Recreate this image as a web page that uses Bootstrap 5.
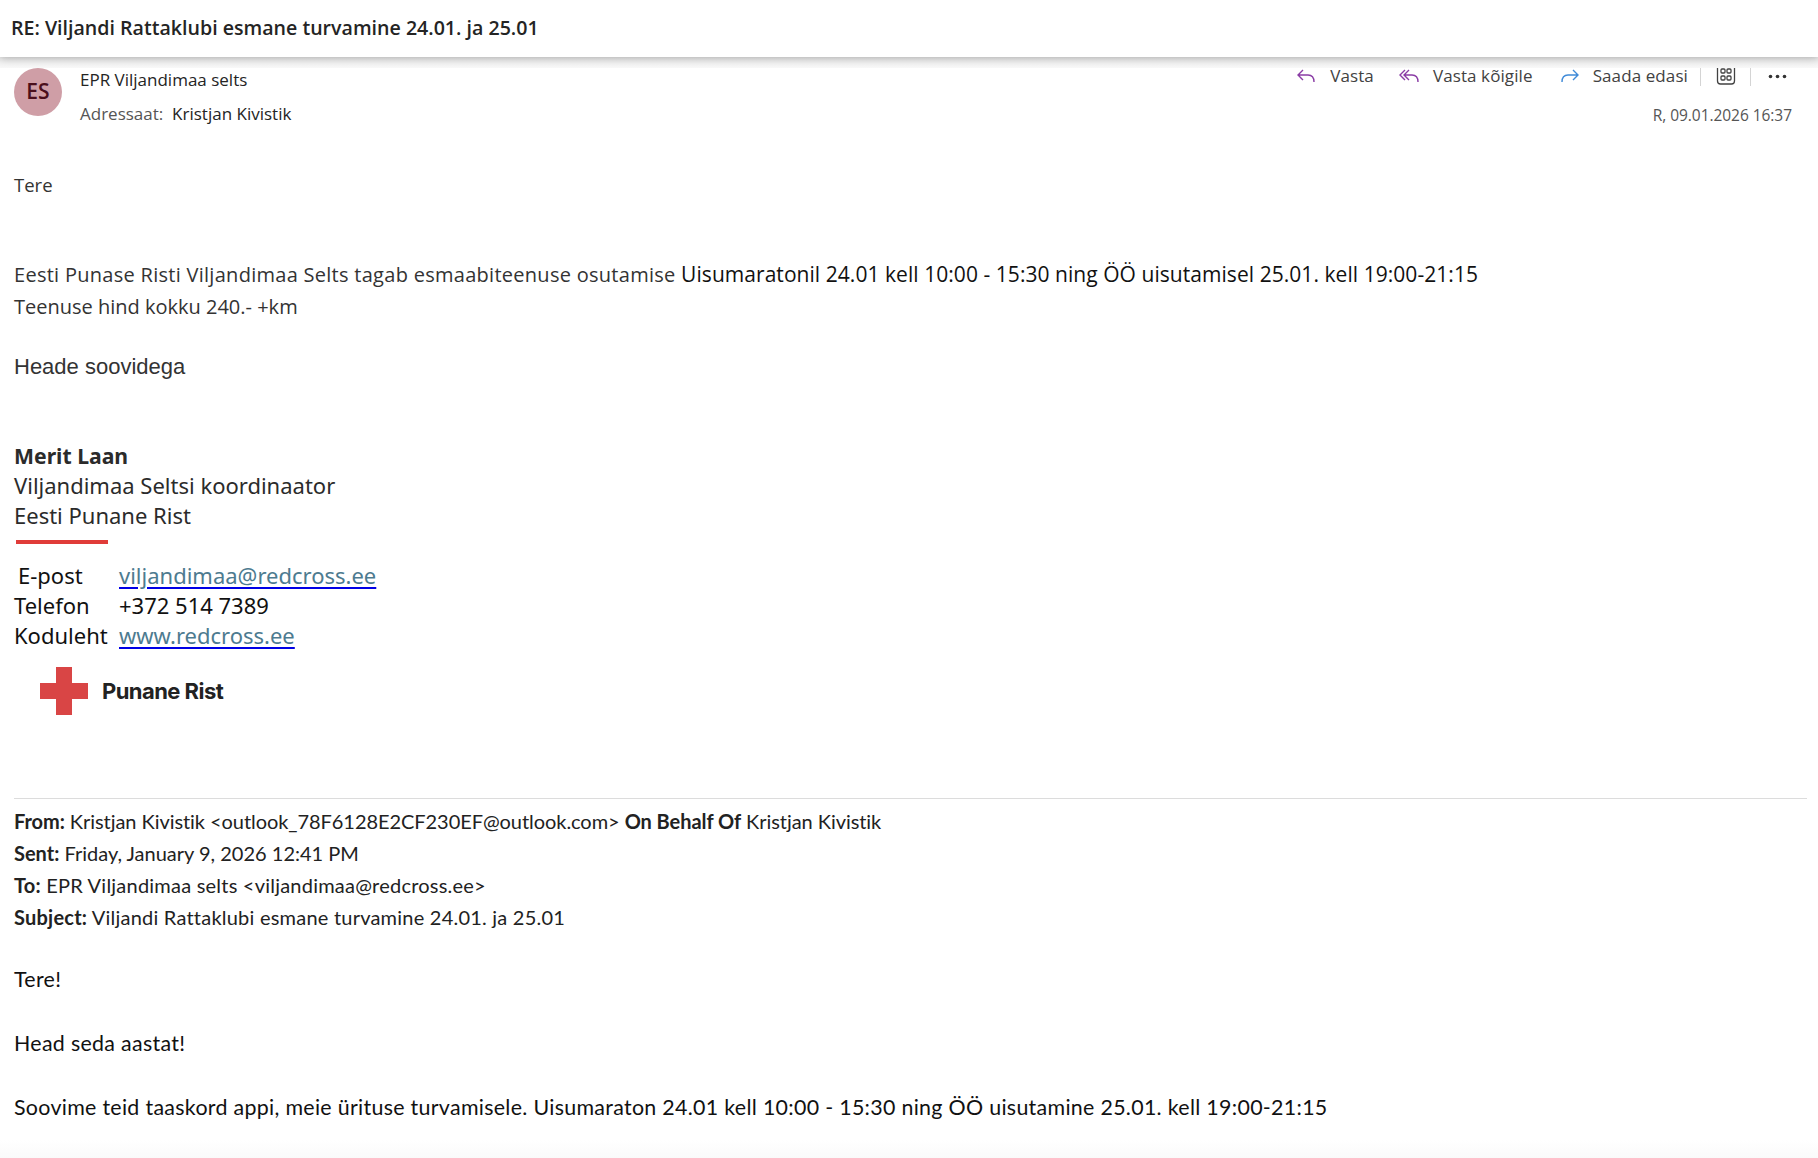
<!DOCTYPE html>
<html lang="et">
<head>
<meta charset="utf-8">
<title>RE: Viljandi Rattaklubi esmane turvamine</title>
<link href="https://cdn.jsdelivr.net/npm/bootstrap@5.3.0/dist/css/bootstrap.min.css" rel="stylesheet">
<style>
html,body{height:1158px;overflow:hidden;background:#fff}
body{font-family:"Open Sans","Noto Sans",sans-serif;color:#242424}
.mail-top{height:57px;background:#fff;box-shadow:0 1px 8px rgba(0,0,0,.28);position:relative;z-index:2;padding-left:11px;font-size:19.6px;font-weight:600;line-height:56px}
.mail-band{height:11px;background:linear-gradient(#ececec,#f8f8f8);position:relative;z-index:1}
.mail-head{height:64px;margin-top:-11px;padding:11px 26px 0 14px}
.avatar-es{width:48px;height:48px;background:#cf9ea6;color:#4a0f1c;font-size:21px;font-weight:600;margin-right:18px}
.who{font-size:17px;line-height:1}
.who-a{padding-top:3px;height:37px}
.who-b{color:#555}
.tool{font-size:17px;color:#424242;letter-spacing:.1px;line-height:22px;height:22px;margin-top:-3px}
.tool svg{display:block}
.tool-gap{margin-right:13px}
.tool-sep{width:1px;height:20px;background:#d4d4d4}
.date-r{font-size:15.5px;color:#555;letter-spacing:-.05px;line-height:20px;margin-top:18px}
.body-a{font-size:20px;color:#333;padding-left:14px;line-height:32px}
.sig{font-family:"Noto Sans",sans-serif;font-size:22px;line-height:30px;color:#2b2b2b;padding-left:14px}
.sig-name{font-size:21.2px;line-height:29px}
.rule-red{width:92px;height:4px;background:#e03c39;margin:10px 0 16px 2px}
.sig-grid{display:grid;grid-template-columns:105px auto;justify-content:start;color:#111}
.sig-grid a{color:#4d7b90;text-decoration-color:#0000e6;text-decoration-thickness:2px;text-underline-offset:3px}
.logo-rp{margin:17px 0 0 26px;height:48px;font-family:"Inter",sans-serif;font-size:22px;font-weight:700;letter-spacing:-.55px;color:#222;gap:14px}
.quote{font-family:"Lato",sans-serif;color:#111}
.quote-rule{height:1px;background:#dcdcdc;margin:0 11px 0 14px}
.q-head{font-size:20px;line-height:32px;padding-left:14px;margin-top:6px;color:#222}
.q-wide{letter-spacing:.22px}
.q-body{font-size:21.4px;line-height:32px;padding-left:14px;letter-spacing:.3px}
.fade-end{height:18px;margin-top:17px;background:linear-gradient(#fff,#fafafa)}
</style>
</head>
<body>
<div class="mail-top">RE: Viljandi Rattaklubi esmane turvamine 24.01. ja 25.01</div>
<div class="mail-band"></div>
<div class="mail-head d-flex">
  <div class="avatar-es rounded-circle d-flex align-items-center justify-content-center flex-shrink-0">ES</div>
  <div class="who flex-grow-1">
    <div class="who-a">EPR Viljandimaa selts</div>
    <div><span class="who-b">Adressaat:</span>&nbsp; Kristjan Kivistik</div>
  </div>
  <div class="d-flex flex-column align-items-end">
    <div class="tool d-flex align-items-center">
      <svg class="tool-gap" width="21" height="17" viewBox="0 0 21 17" fill="none" stroke="#8a3ca5" stroke-width="1.4"><path d="M7 2 2 7l5 5M2 7h10c4 0 6 2.500 6 7"/></svg>
      <span style="margin-right:25px">Vasta</span>
      <svg class="tool-gap" width="21" height="17" viewBox="0 0 21 17" fill="none" stroke="#8a3ca5" stroke-width="1.4"><path d="M6 2 1 7l5 5M10 2 5 7l5 5M5 7h8c4 0 6 2.500 6 7"/></svg>
      <span style="margin-right:26px">Vasta kõigile</span>
      <svg class="tool-gap" width="21" height="17" viewBox="0 0 21 17" fill="none" stroke="#3f8ad8" stroke-width="1.4"><path d="m14 2 5 5-5 5M19 7H9c-4 0-6 2.500-6 7"/></svg>
      <span style="margin-right:12px">Saada edasi</span>
      <span class="tool-sep"></span>
      <svg style="margin:0 14px 0 15px" width="20" height="20" viewBox="0 0 20 20" fill="none" stroke="#424242" stroke-width="1.300"><path d="M1.500 2v13a3 3 0 0 0 3 3h11a3 3 0 0 0 3-3V2"/><rect x="5" y="3" width="4" height="4" rx="1"/><rect x="11" y="3" width="4" height="4" rx="1"/><rect x="5" y="10" width="4" height="4" rx="1"/><rect x="11" y="10" width="4" height="4" rx="1"/></svg>
      <span class="tool-sep"></span>
      <svg style="margin:0 5px 0 17px" width="19" height="5" viewBox="0 0 19 5" fill="#333"><circle cx="2.500" cy="2.500" r="1.800"/><circle cx="9.500" cy="2.500" r="1.800"/><circle cx="16.500" cy="2.500" r="1.800"/></svg>
    </div>
    <div class="date-r">R, 09.01.2026 16:37</div>
  </div>
</div>
<div class="body-a">
  <div style="margin-top:48px;font-size:18.500px">Tere</div>
  <div style="margin-top:57px;letter-spacing:.28px">Eesti Punase Risti Viljandimaa Selts tagab esmaabiteenuse osutamise <span style="color:#111;font-size:21px;letter-spacing:.05px">Uisumaratonil 24.01 kell 10:00 - 15:30 ning ÖÖ uisutamisel 25.01. kell 19:00-21:15</span></div>
  <div>Teenuse hind kokku 240.- +km</div>
  <div style="margin-top:28px;font-family:'Liberation Sans',sans-serif;font-size:22px">Heade soovidega</div>
</div>
<div class="sig" style="margin-top:58px">
  <div class="fw-bold sig-name">Merit Laan</div>
  <div>Viljandimaa Seltsi koordinaator</div>
  <div>Eesti Punane Rist</div>
  <div class="rule-red"></div>
  <div class="sig-grid">
    <div class="ps-1">E-post</div><div><a href="#">viljandimaa@redcross.ee</a></div>
    <div>Telefon</div><div>+372 514 7389</div>
    <div>Koduleht</div><div><a href="#">www.redcross.ee</a></div>
  </div>
  <div class="logo-rp d-flex align-items-center">
    <svg width="48" height="48" viewBox="0 0 48 48"><path fill="#d94545" d="M16 0h16v16h16v16H32v16H16V32H0V16h16z"/></svg>
    <span>Punane Rist</span>
  </div>
</div>
<div class="quote" style="margin-top:83px">
  <div class="quote-rule"></div>
  <div class="q-head">
    <div style="letter-spacing:-.06px"><b>From:</b> Kristjan Kivistik &lt;outlook_78F6128E2CF230EF@outlook.com&gt; <b>On Behalf Of</b> Kristjan Kivistik</div>
    <div><b>Sent:</b> Friday, January 9, 2026 12:41 PM</div>
    <div class="q-wide"><b>To:</b> EPR Viljandimaa selts &lt;viljandimaa@redcross.ee&gt;</div>
    <div class="q-wide"><b>Subject:</b> Viljandi Rattaklubi esmane turvamine 24.01. ja 25.01</div>
  </div>
  <div class="q-body">
    <div style="margin-top:30px">Tere!</div>
    <div style="margin-top:32px">Head seda aastat!</div>
    <div style="margin-top:32px">Soovime teid taaskord appi, meie ürituse turvamisele. Uisumaraton 24.01 kell 10:00 - 15:30 ning ÖÖ uisutamine 25.01. kell 19:00-21:15</div>
  </div>
</div>
<div class="fade-end"></div>
</body>
</html>
